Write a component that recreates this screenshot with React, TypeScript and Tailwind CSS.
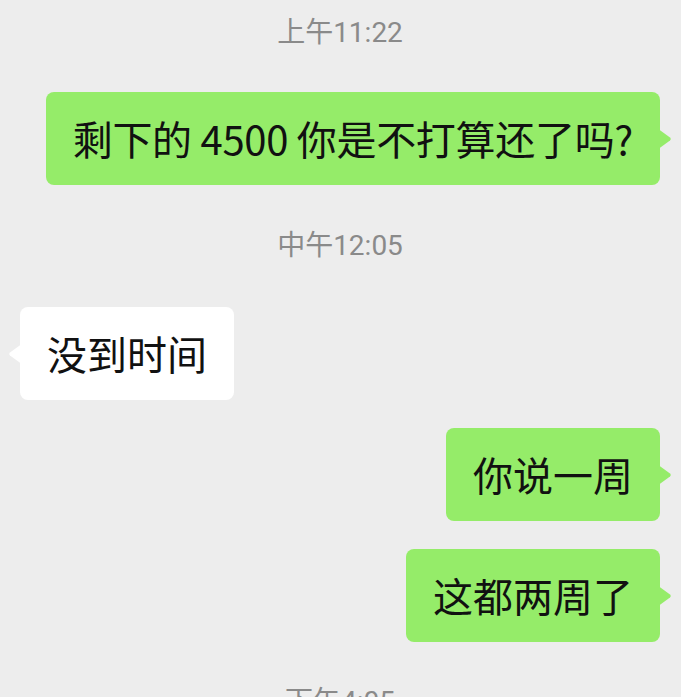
const TIME_FONT = "font-['Roboto','Noto_Sans_CJK_SC',sans-serif]";
const BUBBLE_FONT = "font-['Noto_Sans_CJK_SC',sans-serif]";

type Msg =
  | { kind: 'time'; text: string; mt: string }
  | { kind: 'out' | 'in'; text: string; mt: string; tight?: boolean };

const MESSAGES: Msg[] = [
  { kind: 'time', text: '上午11:22', mt: 'mt-[13px]' },
  { kind: 'out', text: '剩下的 4500 你是不打算还了吗?', mt: 'mt-[39px]', tight: true },
  { kind: 'time', text: '中午12:05', mt: 'mt-[41px]' },
  { kind: 'in', text: '没到时间', mt: 'mt-[41px]' },
  { kind: 'out', text: '你说一周', mt: 'mt-[28px]' },
  { kind: 'out', text: '这都两周了', mt: 'mt-[28px]' },
  { kind: 'time', text: '下午4:05', mt: 'mt-[40px]' },
];

// 气泡尖角
function Tail({ side, color }: { side: 'left' | 'right'; color: string }) {
  return (
    <svg
      width="13"
      height="20"
      viewBox="0 0 13 20"
      className={`absolute top-1/2 -translate-y-1/2 ${side === 'right' ? 'right-[-12px]' : 'left-[-12px] -scale-x-100'}`}
    >
      <path d="M0 0.5 L11 8.4 Q12.8 10 11 11.6 L0 19.5 Z" fill={color} />
    </svg>
  );
}

function Bubble({ text, out, tight }: { text: string; out: boolean; tight?: boolean }) {
  const color = out ? '#95ec69' : '#ffffff';
  return (
    <div
      className={`relative rounded-lg px-[27px] py-[18px] text-[40px] leading-[57px] text-[#111111] whitespace-nowrap ${BUBBLE_FONT} ${
        out ? 'bg-[#95ec69]' : 'bg-white'
      } ${tight ? 'tracking-[-0.3px]' : ''}`}
    >
      {text}
      <Tail side={out ? 'right' : 'left'} color={color} />
    </div>
  );
}

export default function App() {
  return (
    <div className={`h-[697px] w-[681px] overflow-hidden bg-[#ededed] pl-[20px] pr-[21px] ${TIME_FONT}`}>
      <div className="flex flex-col">
        {MESSAGES.map((m, i) => {
          if (m.kind === 'time') {
            return (
              <div key={i} className={`${m.mt} text-center text-[28px] leading-[40px] text-[#8a8a8a]`}>
                {m.text}
              </div>
            );
          }
          return (
            <div key={i} className={`${m.mt} flex ${m.kind === 'out' ? 'justify-end' : 'justify-start'}`}>
              <Bubble text={m.text} out={m.kind === 'out'} tight={m.tight} />
            </div>
          );
        })}
      </div>
    </div>
  );
}
